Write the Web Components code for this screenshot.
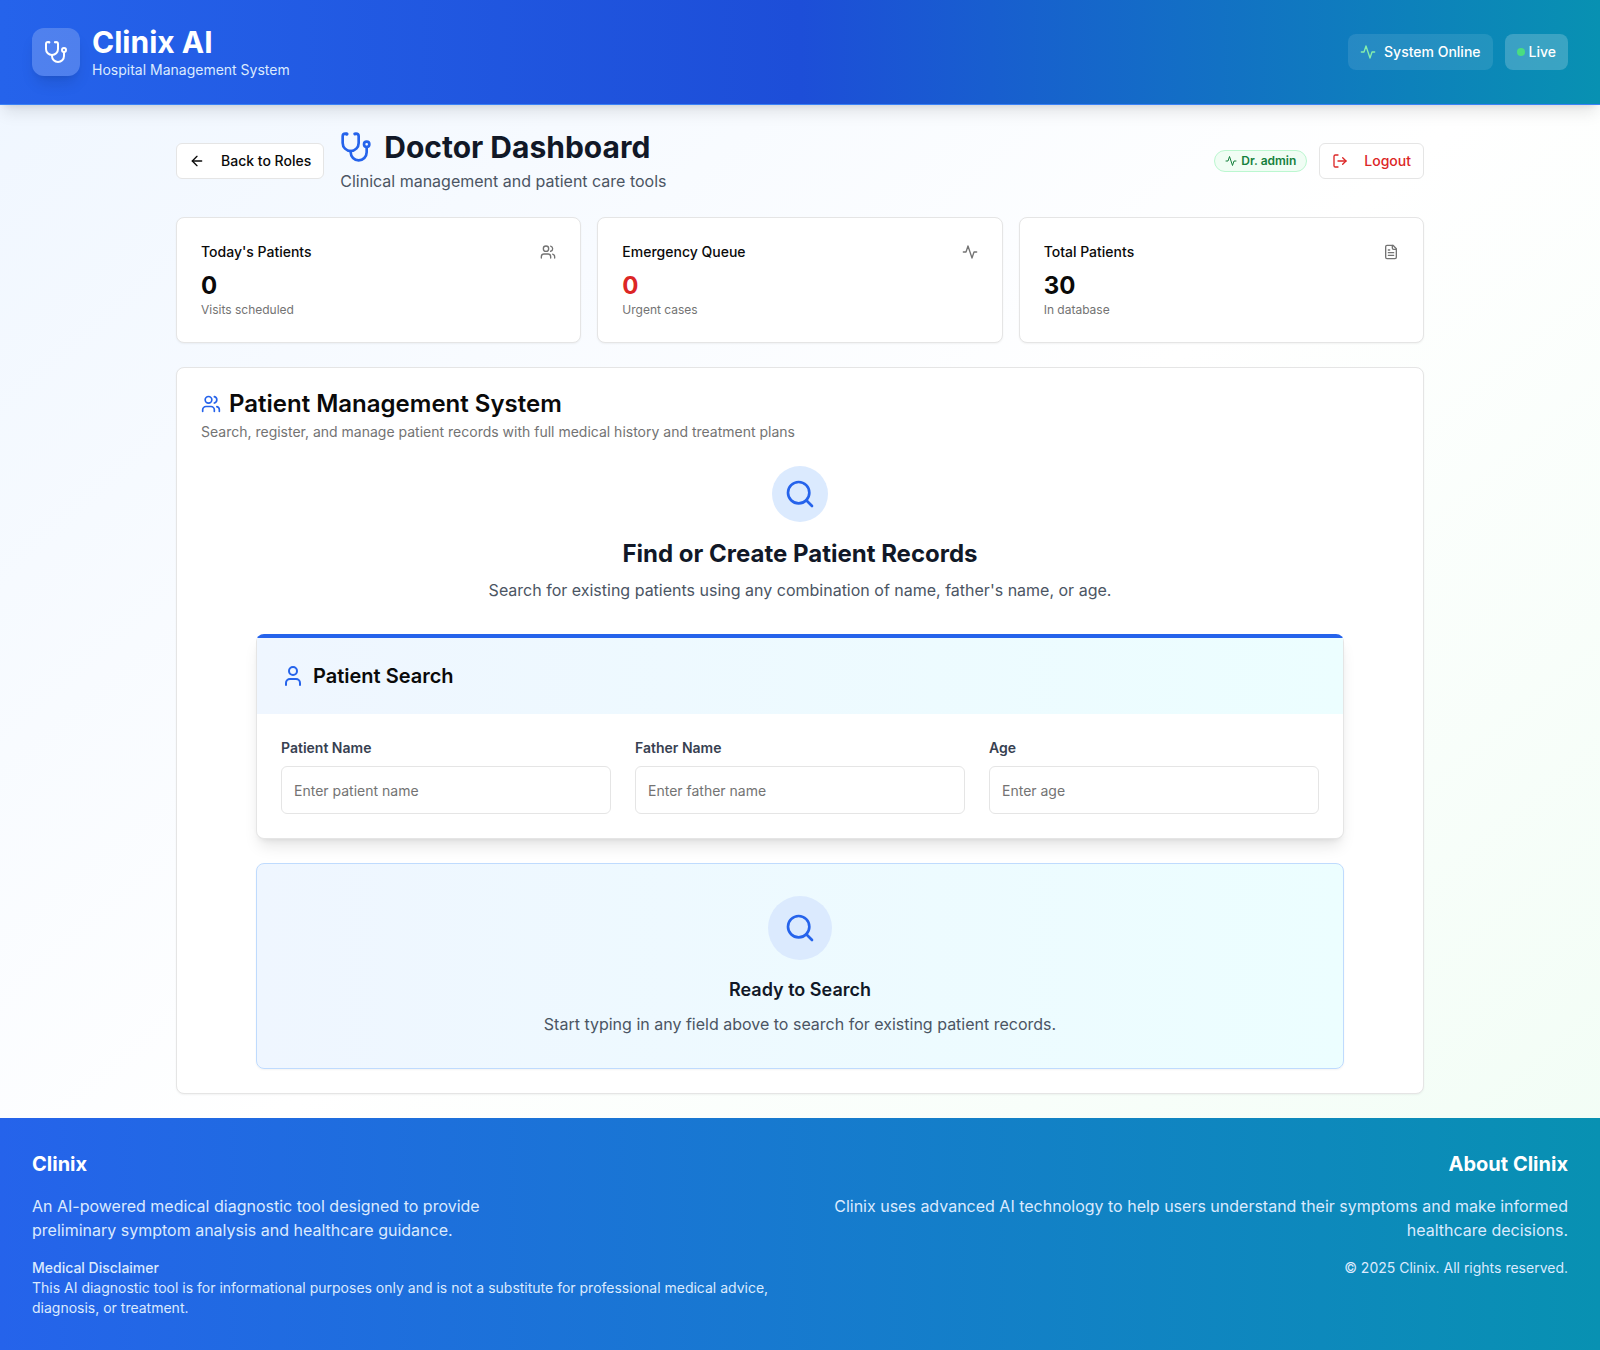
<!DOCTYPE html>
<html lang="en">
<head>
<meta charset="utf-8">
<meta name="viewport" content="width=device-width, initial-scale=1">
<title>Clinix AI – Doctor Dashboard</title>
<style>
  :root {
    --blue: #2563eb;
    --blue-dark: #1d4ed8;
    --cyan: #0891b2;
    --ink: #0a0a0a;
    --heading: #111827;
    --muted: #737373;
    --soft: #4b5563;
    --line: #e5e5e5;
    --tint: linear-gradient(to right, #eff6ff, #ecfeff);
    --shadow-sm: 0 1px 2px 0 rgb(0 0 0 / .05);
    --shadow-lg: 0 10px 15px -3px rgb(0 0 0 / .1), 0 4px 6px -4px rgb(0 0 0 / .1);
  }
  body { margin: 0; font: 400 16px/24px Inter, "Liberation Sans", sans-serif; color: var(--ink); }
</style>
</head>
<body>
<clinix-app></clinix-app>

<script>
const RESET = `
  *, *::before, *::after { box-sizing: border-box; }
  h1, h2, h3, h4, p { margin: 0; }
  button, input { font: inherit; }
`;

class BaseElement extends HTMLElement {
  render(css, html) {
    const template = document.createElement('template');
    template.innerHTML = `<style>${RESET}${css}</style>${html}`;
    this.attachShadow({ mode: 'open' }).append(template.content.cloneNode(true));
  }
}

const ICONS = {
  stethoscope: '<path d="M4.8 2.3A.3.3 0 1 0 5 2H4a2 2 0 0 0-2 2v5a6 6 0 0 0 6 6 6 6 0 0 0 6-6V4a2 2 0 0 0-2-2h-1a.2.2 0 1 0 .3.3"/><path d="M8 15v1a6 6 0 0 0 6 6 6 6 0 0 0 6-6v-4"/><circle cx="20" cy="10" r="2"/>',
  activity: '<path d="M22 12h-4l-3 9L9 3l-3 9H2"/>',
  users: '<path d="M16 21v-2a4 4 0 0 0-4-4H6a4 4 0 0 0-4 4v2"/><path d="M16 3.128a4 4 0 0 1 0 7.744"/><path d="M22 21v-2a4 4 0 0 0-3-3.87"/><circle cx="9" cy="7" r="4"/>',
  file: '<path d="M15 2H6a2 2 0 0 0-2 2v16a2 2 0 0 0 2 2h12a2 2 0 0 0 2-2V7Z"/><path d="M14 2v4a2 2 0 0 0 2 2h4"/><path d="M10 9H8"/><path d="M16 13H8"/><path d="M16 17H8"/>',
  search: '<path d="m21 21-4.3-4.3"/><circle cx="11" cy="11" r="8"/>',
  user: '<path d="M19 21v-2a4 4 0 0 0-4-4H9a4 4 0 0 0-4 4v2"/><circle cx="12" cy="7" r="4"/>',
  back: '<path d="m12 19-7-7 7-7"/><path d="M19 12H5"/>',
  logout: '<path d="m16 17 5-5-5-5"/><path d="M21 12H9"/><path d="M9 21H5a2 2 0 0 1-2-2V5a2 2 0 0 1 2-2h4"/>'
};

customElements.define('clinix-icon', class extends BaseElement {
  connectedCallback() {
    if (this.shadowRoot) return;
    this.render(`
      :host { display: block; flex: none; width: var(--size, 16px); height: var(--size, 16px); }
      svg { display: block; width: 100%; height: 100%; fill: none; stroke: currentColor;
            stroke-width: 2; stroke-linecap: round; stroke-linejoin: round; }
    `, `<svg viewBox="0 0 24 24" aria-hidden="true">${ICONS[this.getAttribute('name')]}</svg>`);
  }
});

customElements.define('clinix-header', class extends BaseElement {
  connectedCallback() {
    if (this.shadowRoot) return;
    this.render(`
      :host { display: block; position: relative; z-index: 1; color: #fff;
              background: linear-gradient(to right, var(--blue), var(--blue-dark), var(--cyan));
              border-bottom: 1px solid #3b82f6; box-shadow: var(--shadow-lg); }
      header { display: flex; align-items: center; justify-content: space-between; padding: 24px 32px; }
      .brand, .status { display: flex; align-items: center; gap: 12px; }
      .logo { padding: 12px; border-radius: 12px; background: rgb(255 255 255 / .2); box-shadow: var(--shadow-lg); --size: 24px; }
      h1 { font-size: 30px; line-height: 36px; font-weight: 700; }
      .brand p { font-size: 14px; line-height: 20px; color: #dbeafe; }
      .pill { display: flex; align-items: center; padding: 8px 12px; border-radius: 8px;
              font-size: 14px; line-height: 20px; font-weight: 500; }
      .system { gap: 8px; background: rgb(255 255 255 / .1); }
      .system clinix-icon { color: #86efac; }
      .live { gap: 4px; background: rgb(255 255 255 / .2); }
      .dot { width: 8px; height: 8px; border-radius: 50%; background: #4ade80; }
    `, `
      <header>
        <div class="brand">
          <div class="logo"><clinix-icon name="stethoscope"></clinix-icon></div>
          <div><h1>Clinix AI</h1><p>Hospital Management System</p></div>
        </div>
        <div class="status">
          <div class="pill system"><clinix-icon name="activity"></clinix-icon><span>System Online</span></div>
          <div class="pill live"><span class="dot"></span><span>Live</span></div>
        </div>
      </header>`);
  }
});

customElements.define('clinix-button', class extends BaseElement {
  connectedCallback() {
    if (this.shadowRoot) return;
    this.render(`
      :host { display: block; flex: none; }
      button { display: flex; align-items: center; gap: 16px; height: 36px; padding: 0 12px; border: 1px solid var(--line);
               border-radius: 6px; background: #fff; color: inherit; font-size: 14px; line-height: 20px; font-weight: 500;
               white-space: nowrap; cursor: pointer; }
    `, `<button type="button"><clinix-icon name="${this.getAttribute('icon')}"></clinix-icon><slot></slot></button>`);
  }
});

customElements.define('clinix-titlebar', class extends BaseElement {
  connectedCallback() {
    if (this.shadowRoot) return;
    this.render(`
      :host { display: flex; align-items: center; justify-content: space-between; }
      .left { display: flex; align-items: center; gap: 16px; }
      .right { display: flex; align-items: center; gap: 12px; }
      .text { display: flex; flex-direction: column; gap: 4px; }
      h2 { display: flex; align-items: center; gap: 12px; font-size: 30px; line-height: 36px; font-weight: 700; color: var(--heading); }
      h2 clinix-icon { --size: 32px; color: var(--blue); }
      p { color: var(--soft); }
      .badge { display: flex; align-items: center; gap: 4px; padding: 2px 10px; border: 1px solid #bbf7d0; border-radius: 11px;
               background: #f0fdf4; color: #15803d; font-size: 12px; line-height: 16px; font-weight: 600; --size: 12px; }
      .exit { color: #dc2626; }
    `, `
      <div class="left">
        <clinix-button icon="back">Back to Roles</clinix-button>
        <div class="text">
          <h2><clinix-icon name="stethoscope"></clinix-icon><span>Doctor Dashboard</span></h2>
          <p>Clinical management and patient care tools</p>
        </div>
      </div>
      <div class="right">
        <div class="badge"><clinix-icon name="activity"></clinix-icon><span>Dr. admin</span></div>
        <clinix-button class="exit" icon="logout">Logout</clinix-button>
      </div>`);
  }
});

customElements.define('clinix-stat', class extends BaseElement {
  connectedCallback() {
    if (this.shadowRoot) return;
    this.render(`
      :host { display: block; padding: 24px; border: 1px solid var(--line); border-radius: 8px; background: #fff; box-shadow: var(--shadow-sm); }
      .top { display: flex; align-items: center; justify-content: space-between; margin-bottom: 8px; }
      h3 { font-size: 14px; line-height: 20px; font-weight: 500; }
      clinix-icon { color: var(--muted); }
      .value { font-size: 24px; line-height: 32px; font-weight: 700; }
      :host([urgent]) .value { color: #dc2626; }
      .note { font-size: 12px; line-height: 16px; color: var(--muted); }
    `, `
      <div class="top"><h3><slot name="label"></slot></h3><clinix-icon name="${this.getAttribute('icon')}"></clinix-icon></div>
      <div class="value"><slot></slot></div>
      <p class="note"><slot name="note"></slot></p>`);
  }
});

customElements.define('clinix-field', class extends BaseElement {
  connectedCallback() {
    if (this.shadowRoot) return;
    this.render(`
      :host { display: flex; flex-direction: column; gap: 8px; min-width: 0; }
      label { font-size: 14px; line-height: 20px; font-weight: 600; color: #374151; }
      input { width: 100%; height: 48px; padding: 0 12px; border: 1px solid var(--line); border-radius: 6px;
              background: #fff; color: var(--ink); font-size: 14px; line-height: 20px; }
      input::placeholder { color: var(--muted); opacity: 1; }
    `, `
      <label for="box">${this.getAttribute('label')}</label>
      <input id="box" type="text" inputmode="${this.getAttribute('mode') || 'text'}" placeholder="${this.getAttribute('hint')}">`);
  }
});

customElements.define('clinix-search', class extends BaseElement {
  connectedCallback() {
    if (this.shadowRoot) return;
    this.render(`
      :host { display: block; border: 1px solid var(--line); border-top: 4px solid var(--blue);
              border-radius: 8px; background: #fff; box-shadow: var(--shadow-lg); }
      h4 { display: flex; align-items: center; gap: 8px; padding: 24px; background: var(--tint);
           font-size: 20px; line-height: 28px; font-weight: 600; }
      h4 clinix-icon { --size: 24px; color: var(--blue); }
      form { display: grid; grid-template-columns: repeat(3, minmax(0, 1fr)); gap: 24px; padding: 24px; }
    `, `
      <h4><clinix-icon name="user"></clinix-icon><span>Patient Search</span></h4>
      <form>
        <clinix-field label="Patient Name" hint="Enter patient name"></clinix-field>
        <clinix-field label="Father Name" hint="Enter father name"></clinix-field>
        <clinix-field label="Age" hint="Enter age" mode="numeric"></clinix-field>
      </form>`);
  }
});

customElements.define('clinix-disc', class extends BaseElement {
  connectedCallback() {
    if (this.shadowRoot) return;
    this.render(`
      :host { display: block; border-radius: 50%; background: #dbeafe; color: var(--blue); --size: 32px; }
    `, `<clinix-icon name="search"></clinix-icon>`);
  }
});

customElements.define('clinix-patients', class extends BaseElement {
  connectedCallback() {
    if (this.shadowRoot) return;
    this.render(`
      :host { display: flex; flex-direction: column; gap: 24px; padding: 24px; border: 1px solid var(--line);
              border-radius: 8px; background: #fff; box-shadow: var(--shadow-sm); }
      .head { display: flex; flex-direction: column; gap: 6px; }
      .head h2 { display: flex; align-items: center; gap: 8px; font-size: 24px; line-height: 24px; font-weight: 600; }
      .head clinix-icon { --size: 20px; color: var(--blue); }
      .head p { font-size: 14px; line-height: 20px; color: var(--muted); }
      .body { display: flex; flex-direction: column; gap: 24px; width: 100%; max-width: 1152px; margin: 0 auto; padding: 0 32px; }
      .intro, .ready { display: flex; flex-direction: column; align-items: center; text-align: center; }
      .intro { margin-bottom: 8px; }
      .intro clinix-disc { padding: 12px; }
      h3 { margin: 16px 0 8px; color: var(--heading); }
      .intro h3 { font-size: 24px; line-height: 32px; font-weight: 700; }
      .intro p, .ready p { color: var(--soft); }
      .ready { padding: 32px; border: 1px solid #bfdbfe; border-radius: 8px; background: var(--tint); box-shadow: var(--shadow-sm); }
      .ready clinix-disc { padding: 16px; }
      .ready h3 { font-size: 18px; line-height: 28px; font-weight: 600; }
    `, `
      <div class="head">
        <h2><clinix-icon name="users"></clinix-icon><span>Patient Management System</span></h2>
        <p>Search, register, and manage patient records with full medical history and treatment plans</p>
      </div>
      <div class="body">
        <div class="intro">
          <clinix-disc></clinix-disc>
          <h3>Find or Create Patient Records</h3>
          <p>Search for existing patients using any combination of name, father's name, or age.</p>
        </div>
        <clinix-search></clinix-search>
        <div class="ready">
          <clinix-disc></clinix-disc>
          <h3>Ready to Search</h3>
          <p>Start typing in any field above to search for existing patient records.</p>
        </div>
      </div>`);
  }
});

customElements.define('clinix-footer', class extends BaseElement {
  connectedCallback() {
    if (this.shadowRoot) return;
    this.render(`
      :host { display: block; background: linear-gradient(to right, var(--blue), var(--cyan)); color: #dbeafe; }
      footer { display: grid; grid-template-columns: repeat(2, minmax(0, 1fr)); gap: 32px; padding: 32px; }
      section { display: flex; flex-direction: column; gap: 16px; }
      section:last-child { text-align: right; }
      h3 { font-size: 20px; line-height: 28px; font-weight: 700; color: #fff; }
      .about { max-width: 448px; }
      .small { font-size: 14px; line-height: 20px; }
      h4 { font-size: 14px; line-height: 20px; font-weight: 500; }
    `, `
      <footer>
        <section>
          <h3>Clinix</h3>
          <p class="about">An AI-powered medical diagnostic tool designed to provide preliminary symptom analysis and healthcare guidance.</p>
          <div class="small">
            <h4>Medical Disclaimer</h4>
            <p>This AI diagnostic tool is for informational purposes only and is not a substitute for professional medical advice, diagnosis, or treatment.</p>
          </div>
        </section>
        <section>
          <h3>About Clinix</h3>
          <p>Clinix uses advanced AI technology to help users understand their symptoms and make informed healthcare decisions.</p>
          <p class="small">© 2025 Clinix. All rights reserved.</p>
        </section>
      </footer>`);
  }
});

customElements.define('clinix-app', class extends BaseElement {
  connectedCallback() {
    if (this.shadowRoot) return;
    this.render(`
      :host { display: flex; flex-direction: column; min-height: 100vh;
              background: linear-gradient(to bottom right, #eff6ff, #fff, #f0fdf4); }
      main { display: flex; flex-direction: column; gap: 24px; flex: 1; width: 100%; max-width: 1280px; margin: 0 auto; padding: 24px 16px; }
      .stats { display: grid; grid-template-columns: repeat(3, minmax(0, 1fr)); gap: 16px; }
    `, `
      <clinix-header></clinix-header>
      <main>
        <clinix-titlebar></clinix-titlebar>
        <div class="stats">
          <clinix-stat icon="users"><span slot="label">Today's Patients</span>0<span slot="note">Visits scheduled</span></clinix-stat>
          <clinix-stat icon="activity" urgent><span slot="label">Emergency Queue</span>0<span slot="note">Urgent cases</span></clinix-stat>
          <clinix-stat icon="file"><span slot="label">Total Patients</span>30<span slot="note">In database</span></clinix-stat>
        </div>
        <clinix-patients></clinix-patients>
      </main>
      <clinix-footer></clinix-footer>`);
  }
});
</script>
</body>
</html>
